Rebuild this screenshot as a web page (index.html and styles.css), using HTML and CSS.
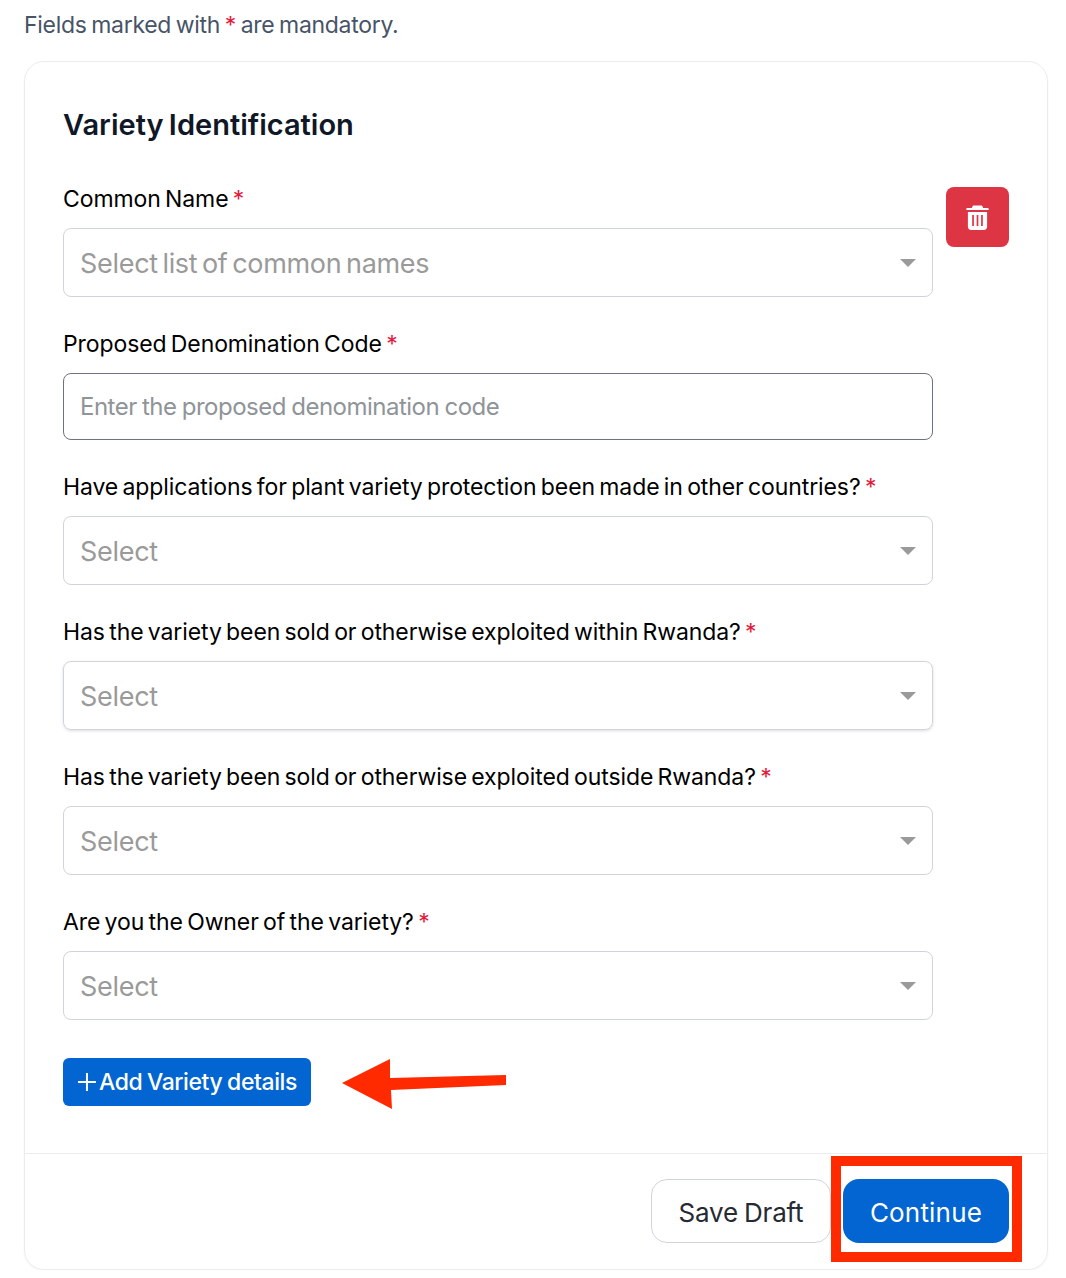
FILE: index.html
```html
<!DOCTYPE html>
<html lang="en">
<head>
    <meta charset="UTF-8">
    <meta name="viewport" content="width=device-width, initial-scale=1.0">
    <title>Variety Identification</title>
    <link rel="stylesheet" href="styles.css">
</head>
<body>
    <p class="note">Fields marked with <span class="req">*</span> are mandatory.</p>

    <div class="card">
        <div class="card-body">
            <h2 class="heading">Variety Identification</h2>

            <div class="row">
                <div class="fields">
                    <div class="field">
                        <label class="label">Common Name <span class="req">*</span></label>
                        <div class="select">
                            <span class="select-text select-text-long">Select list of common names</span>
                            <span class="caret"></span>
                        </div>
                    </div>
                    <div class="field">
                        <label class="label">Proposed Denomination Code <span class="req">*</span></label>
                        <input class="input" type="text" placeholder="Enter the proposed denomination code">
                    </div>
                    <div class="field">
                        <label class="label">Have applications for plant variety protection been made in other countries? <span class="req">*</span></label>
                        <div class="select">
                            <span class="select-text">Select</span>
                            <span class="caret"></span>
                        </div>
                    </div>
                    <div class="field">
                        <label class="label">Has the variety been sold or otherwise exploited within Rwanda? <span class="req">*</span></label>
                        <div class="select select-raised">
                            <span class="select-text">Select</span>
                            <span class="caret"></span>
                        </div>
                    </div>
                    <div class="field">
                        <label class="label">Has the variety been sold or otherwise exploited outside Rwanda? <span class="req">*</span></label>
                        <div class="select">
                            <span class="select-text">Select</span>
                            <span class="caret"></span>
                        </div>
                    </div>
                    <div class="field">
                        <label class="label">Are you the Owner of the variety? <span class="req">*</span></label>
                        <div class="select">
                            <span class="select-text">Select</span>
                            <span class="caret"></span>
                        </div>
                    </div>
                </div>
                <button class="btn-delete" type="button" aria-label="Delete">
                    <svg width="23" height="27" viewBox="0 0 23 27">
                        <path fill="#fff" d="M8 1.600h7c.8 0 1.400.5 1.700 1.200l.5 1.200h4.300c.7 0 1.200.5 1.200 1.100v.8H.3v-.8C.3 4.500.8 4 1.500 4h4.300l.5-1.200C6.600 2.100 7.200 1.600 8 1.600zM1.900 8h19.200v14.800c0 1.800-1.400 3.200-3.200 3.200H5.100c-1.800 0-3.200-1.400-3.200-3.200V8z"/>
                        <path fill="#de3545" d="M6.200 11h1.700v11H6.200zM10.650 11h1.700v11h-1.700zM15.100 11h1.700v11h-1.700z"/>
                    </svg>
                </button>
            </div>

            <div class="add-row">
                <button class="btn-add" type="button">
                    <svg width="20" height="20" viewBox="0 0 20 20"><path fill="#fff" d="M9 1h2v8h8v2h-8v8H9v-8H1V9h8z"/></svg>
                    Add Variety details
                </button>
                <!-- annotation arrow from the screenshot -->
                <svg class="arrow" width="167" height="52" viewBox="0 0 167 52">
                    <path fill="#ff2a00" d="M2 25 L50 1 L50 20 L166 17 L166 27 L51 32 L52 51 Z"/>
                </svg>
            </div>
        </div>

        <div class="card-footer">
            <button class="btn btn-outline" type="button">Save Draft</button>
            <button class="btn btn-primary" type="button">Continue</button>
            <!-- annotation box from the screenshot -->
            <div class="highlight"></div>
        </div>
    </div>
</body>
</html>
```
FILE: styles.css
```css
* {
    box-sizing: border-box;
}
body {
    font-family: Inter, "Noto Sans", sans-serif;
    margin: 0;
    background: #fff;
    color: #000;
}
.note {
    margin: 0 0 11px;
    padding-left: 24px;
    height: 50px;
    line-height: 50px;
    font-size: 23px;
    letter-spacing: -0.3px;
    word-spacing: -1.5px;
    color: #475467;
}
.req {
    color: #e31b3c;
}
.card {
    margin: 0 18px 0 24px;
    height: 1209px;
    border: 1px solid #eaecf0;
    border-radius: 20px;
    box-shadow: 0 1px 2px rgba(16, 24, 40, 0.05);
}
.card-body {
    padding: 0 38px;
    height: 1092px;
    border-bottom: 1px solid #eaecf0;
}
.heading {
    margin: 0;
    padding-top: 44px;
    height: 123px;
    line-height: 38px;
    font-size: 29px;
    font-weight: 600;
    letter-spacing: 0;
    word-spacing: -2px;
    color: #101828;
}
.row {
    display: flex;
    align-items: flex-start;
    gap: 13px;
}
.fields {
    width: 870px;
}
.field {
    margin-bottom: 32.6px;
}
.label {
    display: block;
    height: 28px;
    line-height: 28px;
    margin-bottom: 15.4px;
    font-size: 23px;
    letter-spacing: -0.1px;
    word-spacing: -2px;
    white-space: nowrap;
}
.select {
    display: flex;
    align-items: center;
    justify-content: space-between;
    height: 69px;
    padding: 0 16px 0 17px;
    border: 1px solid #d0d5dd;
    border-radius: 8px;
}
.select-raised {
    box-shadow: 0 1px 3px rgba(16, 24, 40, 0.15);
}
.select-text {
    margin-left: -1px;
    padding-top: 1px;
    font-size: 27px;
    letter-spacing: -0.3px;
    word-spacing: -2.700px;
    color: #9a9a9a;
}
.caret {
    width: 0;
    height: 0;
    border-left: 8px solid transparent;
    border-right: 8px solid transparent;
    border-top: 8px solid #9a9a9a;
}
.input {
    display: block;
    width: 100%;
    height: 67px;
    padding: 0 16px;
    border: 1px solid #6b7280;
    border-radius: 8px;
    font-family: inherit;
    font-size: 24px;
    letter-spacing: -0.5px;
    word-spacing: -1px;
    outline: none;
}
.input::placeholder {
    color: #8f9498;
}
.btn-delete {
    display: flex;
    align-items: center;
    justify-content: center;
    width: 63px;
    height: 60px;
    margin-top: 2px;
    padding: 0;
    border: none;
    border-radius: 8px;
    background: #de3545;
}
.add-row {
    position: relative;
    margin-top: 5px;
}
.btn-add {
    display: flex;
    align-items: center;
    gap: 2px;
    width: 248px;
    height: 48px;
    padding: 0 14px;
    border: none;
    border-radius: 6px;
    background: #0265d2;
    color: #fff;
    font-family: inherit;
    font-size: 23px;
    font-weight: 500;
    letter-spacing: -0.4px;
    word-spacing: -1px;
    white-space: nowrap;
}
.arrow {
    position: absolute;
    left: 277px;
    top: 0;
}
.card-footer {
    position: relative;
    display: flex;
    justify-content: flex-end;
    gap: 12px;
    padding: 25px 38px 0 0;
}
.btn {
    height: 64px;
    border-radius: 16px;
    font-family: inherit;
    font-size: 26px;
    padding-top: 3px;
    letter-spacing: 0.2px;
}
.btn-outline {
    width: 180px;
    border: 1px solid #d0d5dd;
    background: #fff;
    color: #252a33;
    letter-spacing: -0.2px;
    word-spacing: -1px;
}
.btn-primary {
    width: 166px;
    border: none;
    background: #0265d2;
    color: #fff;
}
.highlight {
    position: absolute;
    top: 2px;
    right: 25px;
    width: 191px;
    height: 106px;
    border: 10px solid #ff2a00;
    pointer-events: none;
}
```
